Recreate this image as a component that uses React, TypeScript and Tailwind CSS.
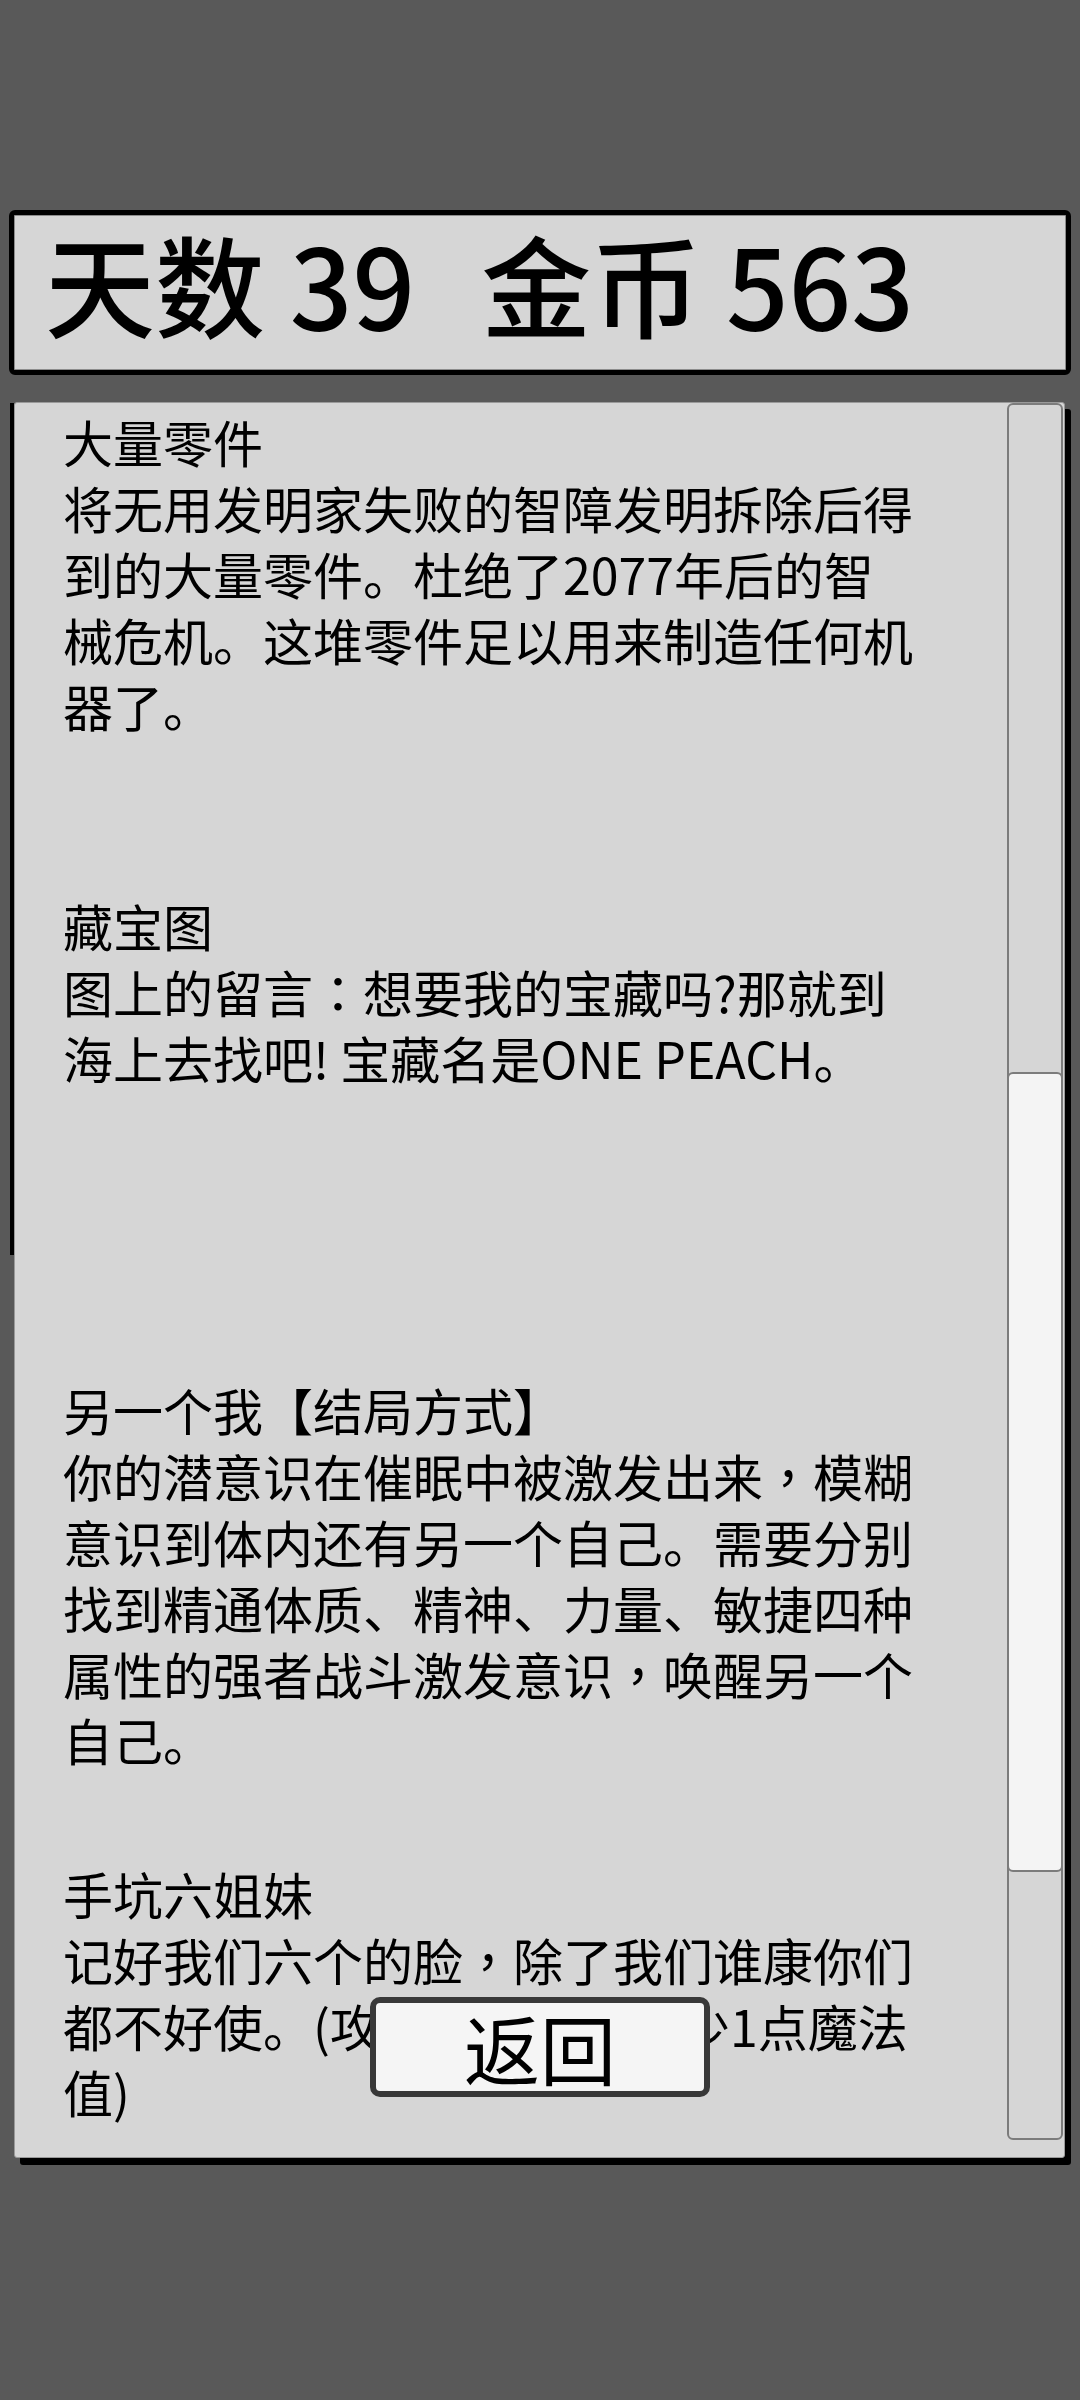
const items = [
  {
    title: '大量零件',
    text: '将无用发明家失败的智障发明拆除后得到的大量零件。杜绝了2077年后的智械危机。这堆零件足以用来制造任何机器了。',
  },
  {
    title: '藏宝图',
    text: '图上的留言：想要我的宝藏吗?那就到海上去找吧! 宝藏名是ONE PEACH。',
  },
  {
    title: '另一个我【结局方式】',
    text: '你的潜意识在催眠中被激发出来，模糊意识到体内还有另一个自己。需要分别找到精通体质、精神、力量、敏捷四种属性的强者战斗激发意识，唤醒另一个自己。',
  },
  {
    title: '手坑六姐妹',
    text: '记好我们六个的脸，除了我们谁康你们都不好使。(攻击时有几率减少1点魔法值)',
  },
]

// full-width comma and colon sit in the middle of the cell in this font set
function Desc({ text }: { text: string }) {
  return (
    <>
      {text.split(/([，：])/).map((part, i) =>
        part === '，' || part === '：' ? (
          <span key={i} className="font-['Noto_Sans_CJK_TC',sans-serif]">
            {part}
          </span>
        ) : (
          part
        ),
      )}
    </>
  )
}

export default function App() {
  return (
    <div className="w-[1080px] h-[2400px] overflow-hidden bg-[#595959] pt-[210px] text-black font-['Noto_Sans_CJK_SC','Noto_Sans',sans-serif]">
      {/* status bar: days and coins */}
      <div className="mx-[9px] h-[165px] rounded-[6px] border-[5px] border-black bg-[#d6d6d6] shadow-[inset_0_0_0_1px_#8c8c8c] flex items-start pt-[12px] pl-[31px] text-[110px] leading-[110px] font-medium whitespace-nowrap">
        <span>天数 39</span>
        <span className="ml-[66px]">金币 563</span>
      </div>

      {/* item list */}
      <div className="relative mt-[27px] ml-[14px] w-[1051px] h-[1756px] rounded-[3px] border border-[#9a9a9a] bg-[#d6d6d6] shadow-[6px_7px_0_#000] flex">
        <div className="absolute -left-[5px] top-0 w-[4px] h-[852px] bg-black" />

        <div className="flex-1 overflow-hidden pl-[48px] pt-[5px]">
          {items.map((it) => (
            <div key={it.title} className="h-[484px] w-[855px] text-[50px] leading-[66px]">
              <div>{it.title}</div>
              <div>
                <Desc text={it.text} />
              </div>
            </div>
          ))}
        </div>

        <div className="w-[56px] mb-[17px] mr-[1px] rounded-[6px] border-2 border-[#7c7c7c] bg-[#d6d6d6]">
          <div className="-mx-[2px] mt-[667px] h-[800px] rounded-[6px] border-2 border-[#7c7c7c] bg-[#f4f4f4]" />
        </div>

        <button className="absolute left-[355px] top-[1594px] w-[340px] h-[100px] rounded-[10px] border-[6px] border-[#383838] bg-[#f5f5f5] flex items-center justify-center text-[76px] leading-none">
          返回
        </button>
      </div>
    </div>
  )
}
